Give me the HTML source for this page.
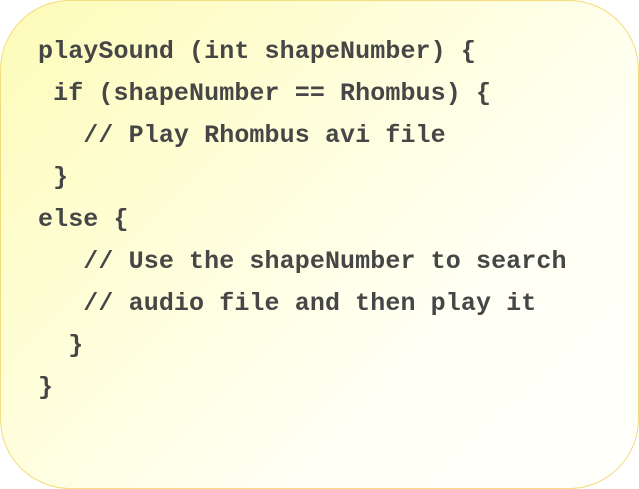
<!DOCTYPE html>
<html><head><style>
html,body{margin:0;padding:0;background:#fff;width:639px;height:489px;overflow:hidden}
.box{position:absolute;left:0;top:0;width:637px;height:487px;border:1px solid #f3dd7e;border-radius:70px;
background:linear-gradient(135deg,#fdfbb8 0%,#fefed8 35%,#fffff2 65%,#fffffc 100%);}
pre{position:absolute;left:38px;top:31px;margin:0;font-family:"Liberation Mono",monospace;font-weight:bold;
font-size:25px;line-height:42px;color:#464646;letter-spacing:0.1px}
</style></head><body>
<div class="box"></div>
<pre>playSound (int shapeNumber) {
 if (shapeNumber == Rhombus) {
   // Play Rhombus avi file
 }
else {
   // Use the shapeNumber to search
   // audio file and then play it
  }
}</pre>
</body></html>
